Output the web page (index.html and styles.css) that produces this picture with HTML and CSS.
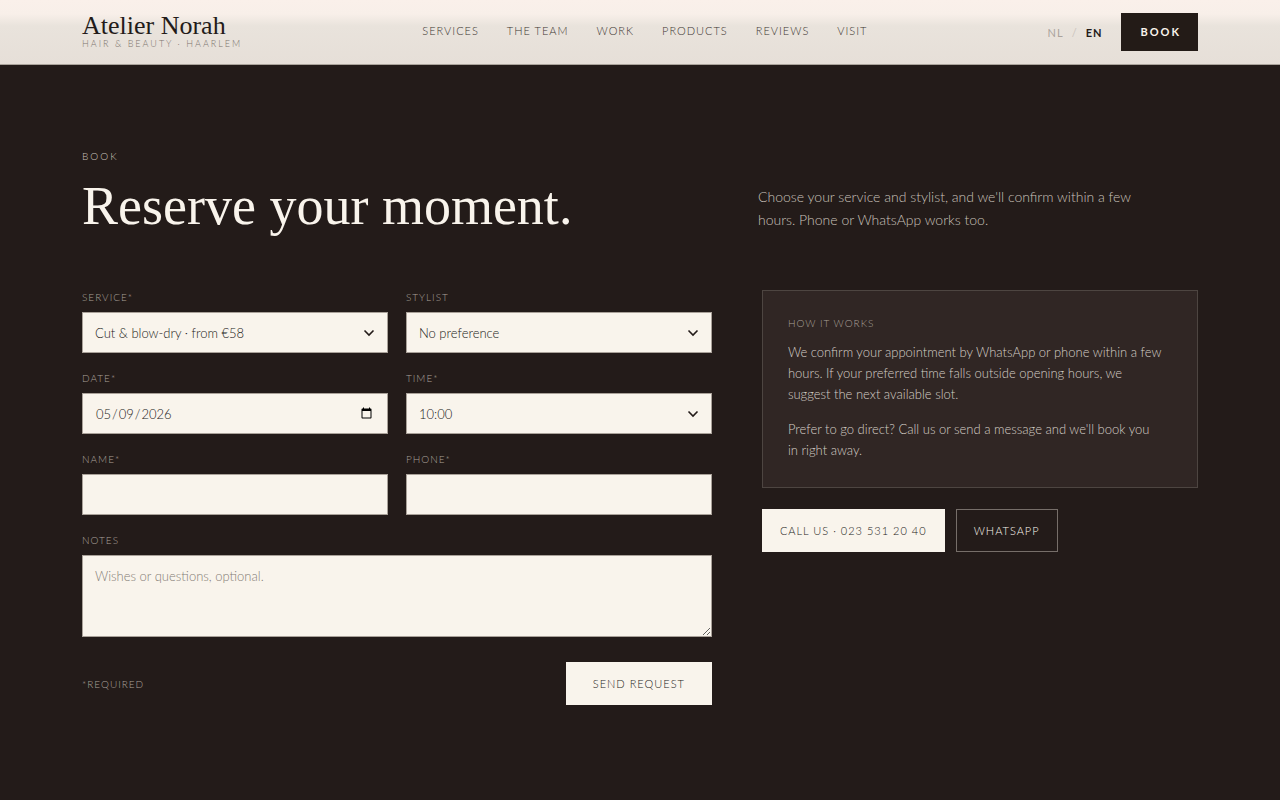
FILE: index.html
```
<!DOCTYPE html>
<html lang="en">
<head>
  <meta charset="UTF-8">
  <meta name="viewport" content="width=device-width, initial-scale=1.0">
  <title>Atelier Norah</title>
  <link rel="stylesheet" href="styles.css">
</head>
<body>
  <header class="header">
    <a class="brand" href="#">
      <span class="brand-name">Atelier Norah</span>
      <span class="brand-sub">Hair &amp; Beauty · Haarlem</span>
    </a>
    <nav class="nav">
      <a href="#services">Services</a>
      <a href="#team">The team</a>
      <a href="#work">Work</a>
      <a href="#products">Products</a>
      <a href="#reviews">Reviews</a>
      <a href="#visit">Visit</a>
    </nav>
    <div class="header-actions">
      <div class="lang">
        <a href="#nl">NL</a>
        <span class="slash">/</span>
        <a class="active" href="#en">EN</a>
      </div>
      <a class="btn-book" href="#book">Book</a>
    </div>
  </header>

  <main class="booking" id="book">
    <div class="intro">
      <div>
        <p class="eyebrow">Book</p>
        <h1>Reserve your moment.</h1>
      </div>
      <p class="lead">Choose your service and stylist, and we'll confirm within a few hours. Phone or WhatsApp works too.</p>
    </div>

    <div class="columns">
      <form class="form">
        <div class="field">
          <label for="service">Service*</label>
          <div class="select">
            <select id="service" required>
              <option>Cut &amp; blow-dry · from €58</option>
            </select>
            <svg width="12" height="8" viewBox="0 0 12 8" aria-hidden="true"><path d="M1.5 1.5 6 6l4.5-4.5"/></svg>
          </div>
        </div>
        <div class="field">
          <label for="stylist">Stylist</label>
          <div class="select">
            <select id="stylist">
              <option>No preference</option>
            </select>
            <svg width="12" height="8" viewBox="0 0 12 8" aria-hidden="true"><path d="M1.5 1.5 6 6l4.5-4.5"/></svg>
          </div>
        </div>
        <div class="field">
          <label for="date">Date*</label>
          <input id="date" type="date" value="2026-05-09" required>
        </div>
        <div class="field">
          <label for="time">Time*</label>
          <div class="select">
            <select id="time" required>
              <option>10:00</option>
            </select>
            <svg width="12" height="8" viewBox="0 0 12 8" aria-hidden="true"><path d="M1.5 1.5 6 6l4.5-4.5"/></svg>
          </div>
        </div>
        <div class="field">
          <label for="name">Name*</label>
          <input id="name" type="text" required>
        </div>
        <div class="field">
          <label for="phone">Phone*</label>
          <input id="phone" type="tel" required>
        </div>
        <div class="field wide">
          <label for="notes">Notes</label>
          <textarea id="notes" placeholder="Wishes or questions, optional."></textarea>
        </div>
        <div class="form-footer wide">
          <span class="required">*Required</span>
          <button class="btn btn-send" type="submit">Send request</button>
        </div>
      </form>

      <aside>
        <div class="card">
          <h2>How it works</h2>
          <p>We confirm your appointment by WhatsApp or phone within a few hours. If your preferred time falls outside opening hours, we suggest the next available slot.</p>
          <p>Prefer to go direct? Call us or send a message and we'll book you in right away.</p>
        </div>
        <div class="contact">
          <a class="btn" href="tel:0235312040">Call us · 023 531 20 40</a>
          <a class="btn btn-outline" href="#whatsapp">WhatsApp</a>
        </div>
      </aside>
    </div>
  </main>
</body>
</html>
```
FILE: styles.css
```
* {
  box-sizing: border-box;
}
body {
  margin: 0;
  min-height: 100vh;
  background: #231b19;
  color: #f9f4ec;
  font-family: Lato, "Open Sans", sans-serif;
  font-weight: 300;
  font-size: 13px;
}
h1, h2, p {
  margin: 0;
  font-weight: 300;
}
a {
  color: inherit;
  text-decoration: none;
}
.header {
  display: flex;
  justify-content: space-between;
  align-items: center;
  height: 65px;
  padding: 0 82px;
  background: linear-gradient(#faf0ea 0, #f8efe9 14px, #e9e3dc 26px, #e6dfd8 100%);
  border-bottom: 1px solid #aaa39b;
  color: #231b19;
}
.brand {
  padding-bottom: 3px;
}
.brand-name {
  display: block;
  font-family: "Liberation Serif", serif;
  font-weight: 400;
  font-size: 26px;
  line-height: 26px;
}
.brand-sub {
  display: block;
  color: #7d756e;
  font-size: 9px;
  line-height: 9px;
  letter-spacing: 2px;
  text-transform: uppercase;
}
.nav {
  display: flex;
  gap: 28px;
  padding-bottom: 3px;
  color: #3c3531;
  font-size: 11px;
  letter-spacing: 1px;
  text-transform: uppercase;
}
.header-actions {
  display: flex;
  align-items: center;
  gap: 19px;
}
.lang {
  display: flex;
  gap: 8px;
  color: #aaa39c;
  font-size: 11px;
  font-weight: 400;
  letter-spacing: 1px;
}
.lang .slash {
  color: #cbc4bd;
}
.lang .active {
  color: #231b19;
  font-weight: 700;
}
.btn-book {
  padding: 0 17px 0 19px;
  background: #231b17;
  color: #f9f4ec;
  font-size: 11px;
  font-weight: 700;
  line-height: 38px;
  letter-spacing: 2px;
  text-transform: uppercase;
}
.booking {
  padding: 84px 82px 94px;
}
.intro {
  display: grid;
  grid-template-columns: 14fr 10fr;
  gap: 60px;
  align-items: end;
  padding-bottom: 57px;
}
.eyebrow {
  color: #c9c1b9;
  font-size: 10px;
  line-height: 14px;
  letter-spacing: 2px;
  text-transform: uppercase;
}
h1 {
  margin-top: 16px;
  font-family: "Liberation Serif", serif;
  font-weight: 400;
  font-size: 54px;
  line-height: 54px;
}
.lead {
  max-width: 400px;
  padding-bottom: 2px;
  color: #c9c1b9;
  font-size: 14px;
  line-height: 23px;
}
.columns {
  display: grid;
  grid-template-columns: 13fr 9fr;
  gap: 50px;
  align-items: start;
}
.form {
  display: grid;
  grid-template-columns: 1fr 1fr;
  gap: 18px;
}
.wide {
  grid-column: 1 / -1;
}
.field {
  display: flex;
  flex-direction: column;
  gap: 8px;
}
.field label,
.required {
  color: #aaa199;
  font-size: 10px;
  line-height: 14px;
  letter-spacing: 1px;
  text-transform: uppercase;
}
input,
select,
textarea {
  display: block;
  width: 100%;
  height: 41px;
  padding: 0 12px;
  border: 1px solid #a9a199;
  border-radius: 0;
  background: #f9f4ec;
  color: #231b19;
  font: inherit;
}
textarea {
  height: 82px;
  padding: 12px;
  resize: vertical;
}
textarea::placeholder {
  color: #857d76;
}
.select {
  display: grid;
  align-items: center;
}
.select select,
.select svg {
  grid-area: 1 / 1;
}
.select select {
  appearance: none;
}
.select svg {
  justify-self: end;
  margin-right: 13px;
  fill: none;
  stroke: #231b19;
  stroke-width: 1.6;
  pointer-events: none;
}
.form-footer {
  display: flex;
  justify-content: space-between;
  align-items: center;
  padding-top: 7px;
}
.btn {
  padding: 0 17px;
  border: 1px solid #f9f4ec;
  background: #f9f4ec;
  color: #231b19;
  font-family: inherit;
  font-weight: 300;
  font-size: 11px;
  line-height: 41px;
  letter-spacing: 1px;
  text-transform: uppercase;
}
.btn-send {
  padding: 0 26px;
}
.btn-outline {
  border-color: #766e69;
  background: transparent;
  color: #f9f4ec;
}
.card {
  padding: 25px 25px 26px;
  border: 1px solid #4d4541;
  background: #302624;
}
.card h2 {
  color: #aaa199;
  font-size: 10px;
  line-height: 14px;
  letter-spacing: 1px;
  text-transform: uppercase;
}
.card p {
  max-width: 374px;
  margin-top: 14px;
  color: #d5cec6;
  line-height: 21px;
}
.card h2 + p {
  margin-top: 12px;
}
.contact {
  display: flex;
  flex-wrap: wrap;
  gap: 11px;
  margin-top: 21px;
}
```
